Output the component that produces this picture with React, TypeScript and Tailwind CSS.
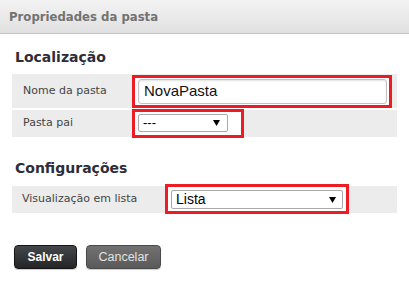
import React from "react";

function Arrow() {
  return (
    <svg width="7" height="6" viewBox="0 0 7 6" className="block">
      <path d="M0 0 H7 L3.5 6 Z" fill="#000" />
    </svg>
  );
}

export default function App() {
  return (
    <div className="w-[409px] h-[286px] bg-white overflow-hidden font-['DejaVu_Sans',sans-serif]">
      <div className="h-[34px] border-b border-[#c4c4c4] bg-gradient-to-b from-[#f3f3f3] to-[#e0e0e0] flex items-center pl-[9px]">
        <span className="text-[13px] font-bold text-[#727272] font-['DejaVu_Sans_Condensed','DejaVu_Sans',sans-serif] leading-none">
          Propriedades da pasta
        </span>
      </div>
      <div className="px-3">
        <h2 className="mt-[13px] ml-[3px] text-[14px] font-bold leading-[20px] text-[#2d2d3a]">
          Localização
        </h2>
        <div className="mt-[7px] h-[34px] bg-[#ececec] flex items-start">
          <div className="w-[120px] h-full flex items-center pl-[11px] text-[11px] text-[#444]">
            Nome da pasta
          </div>
          <div className="mt-px h-[33px] w-[260px] border-[3px] border-[#ed1c24] bg-white pl-[3px] pt-px">
            <div className="w-[249px] h-[25px] border border-[#c2c2c2] rounded-[3px] shadow-[inset_0_1px_2px_rgba(0,0,0,0.12)] flex items-center pl-[5px] text-[15px] font-['Liberation_Sans',Arial,sans-serif] text-[#111]">
              NovaPasta
            </div>
          </div>
        </div>
        <div className="mt-[2px] h-[27px] bg-[#ececec] flex items-start">
          <div className="w-[120px] h-full flex items-center pl-[11px] text-[11px] text-[#444]">
            Pasta pai
          </div>
          <div className="-mt-px h-[29px] w-[112px] border-[3px] border-[#ed1c24] bg-white pl-[3px] pt-[2px]">
            <div className="w-[90px] h-[18px] border border-[#a9a9a9] rounded-[2px] bg-white flex items-center justify-between pl-[4px] pr-[7px] text-[13px] font-['Liberation_Sans',Arial,sans-serif] text-black">
              <span>---</span>
              <Arrow />
            </div>
          </div>
        </div>
        <h2 className="mt-[21px] ml-[3px] text-[14px] font-bold leading-[20px] text-[#2d2d3a]">
          Configurações
        </h2>
        <div className="mt-[8px] h-[27px] bg-[#ececec] flex items-start">
          <div className="w-[153px] h-full flex items-center pl-[10px] text-[11px] text-[#444]">
            Visualização em lista
          </div>
          <div className="-mt-[2px] h-[30px] w-[184px] border-[3px] border-[#ed1c24] bg-white pl-[3px] pt-[3px]">
            <div className="w-[172px] h-[19px] border border-[#a9a9a9] rounded-[2px] bg-white flex items-center justify-between pl-[4px] pr-[6px] text-[14px] font-['Liberation_Sans',Arial,sans-serif] text-black">
              <span>Lista</span>
              <Arrow />
            </div>
          </div>
        </div>
        <div className="mt-[32px] ml-[2px] flex gap-[9px]">
          <button className="w-[63px] h-[24px] rounded-[4px] border border-[#151515] bg-gradient-to-b from-[#45484b] to-[#232527] text-white font-bold text-[12px] font-['Liberation_Sans',Arial,sans-serif] flex items-center justify-center shadow-[0_1px_1px_rgba(0,0,0,0.2)]">
            Salvar
          </button>
          <button className="w-[75px] h-[24px] rounded-[4px] border border-[#4a4a4a] bg-gradient-to-b from-[#727272] to-[#5a5a5a] text-[#e2e2e2] text-[12.5px] font-['Liberation_Sans',Arial,sans-serif] flex items-center justify-center shadow-[0_1px_1px_rgba(0,0,0,0.2)]">
            Cancelar
          </button>
        </div>
      </div>
    </div>
  );
}
